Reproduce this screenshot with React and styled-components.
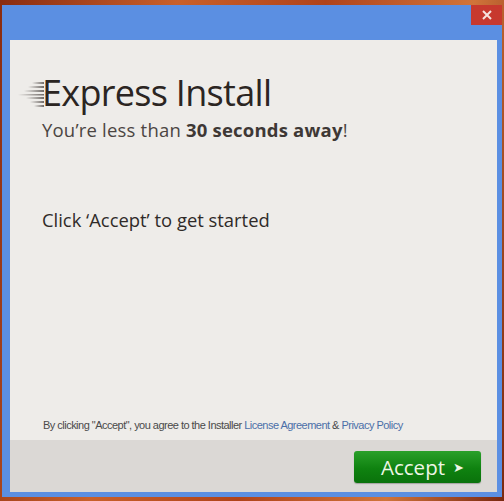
import React from "react";
import styled, { createGlobalStyle } from "styled-components";

const Global = createGlobalStyle`
  html, body {
    margin: 0;
    padding: 0;
    width: 504px;
    height: 501px;
    overflow: hidden;
    background: linear-gradient(100deg, #8a2c10 0%, #c9602a 30%, #b0431a 55%, #d0743a 80%, #7a2810 100%);
  }
`;

export default function App() {
  return (
    <>
      <Global />
      <Window>
        <TitleBar>
          <CloseButton aria-label="Close">
            <svg width="10" height="10" viewBox="0 0 10 10">
              <path d="M1 1L9 9M9 1L1 9" stroke="#f6e3df" strokeWidth="2" />
            </svg>
          </CloseButton>
        </TitleBar>
        <Panel>
          <Main>
            <Heading>
              <SpeedLines width="26" height="26" viewBox="0 0 26 26">
                <defs>
                  <linearGradient id="fade" x1="0" x2="1" y1="0" y2="0">
                    <stop offset="0" stopColor="#3a3330" stopOpacity="0" />
                    <stop offset="1" stopColor="#3a3330" stopOpacity="0.7" />
                  </linearGradient>
                </defs>
                <rect x="14" y="1" width="12" height="2" fill="url(#fade)" />
                <rect x="10" y="5" width="16" height="2" fill="url(#fade)" />
                <rect x="6" y="9" width="20" height="2" fill="url(#fade)" />
                <rect x="0" y="13" width="26" height="1.5" fill="url(#fade)" />
                <rect x="8" y="16" width="18" height="2" fill="url(#fade)" />
                <rect x="12" y="20" width="14" height="2" fill="url(#fade)" />
                <rect x="16" y="24" width="10" height="2" fill="url(#fade)" />
              </SpeedLines>
              Express Install
            </Heading>
            <Subtitle>
              You’re less than <strong>30 seconds away</strong>!
            </Subtitle>
            <Prompt>Click ‘Accept’ to get started</Prompt>
            <Legal>
              By clicking "Accept", you agree to the Installer{" "}
              <LegalLink>License Agreement</LegalLink> &amp;{" "}
              <LegalLink>Privacy Policy</LegalLink>
            </Legal>
          </Main>
          <Footer>
            <AcceptButton>
              Accept <Arrow>➤</Arrow>
            </AcceptButton>
          </Footer>
        </Panel>
      </Window>
    </>
  );
}

const Window = styled.div`
  margin: 5px 0 0 2px;
  width: 500px;
  height: 492px;
  background: #5b8fe2;
  display: flex;
  flex-direction: column;
  padding: 0 5px 5px 8px;
  box-sizing: border-box;
`;

const TitleBar = styled.div`
  height: 35px;
  display: flex;
  justify-content: flex-end;
  align-items: flex-start;
  margin-right: -5px;
`;

const CloseButton = styled.div`
  width: 31px;
  height: 20px;
  background: #c7392e;
  display: flex;
  align-items: center;
  justify-content: center;
`;

const Panel = styled.div`
  flex: 1;
  display: flex;
  flex-direction: column;
  background: #eeece9;
`;

const Main = styled.div`
  flex: 1;
  padding: 33px 0 0 32px;
  display: flex;
  flex-direction: column;
  font-family: "Open Sans", "Liberation Sans", sans-serif;
`;

const Heading = styled.h1`
  position: relative;
  margin: 0;
  font-weight: 400;
  font-size: 36px;
  line-height: 40px;
  letter-spacing: -0.7px;
  color: #2b2522;
`;

const SpeedLines = styled.svg`
  position: absolute;
  left: -24px;
  top: 8px;
`;

const Subtitle = styled.p`
  margin: 5px 0 0;
  font-size: 18.5px;
  line-height: 24px;
  letter-spacing: 0.2px;
  color: #4b4542;
  strong {
    font-weight: 700;
    color: #3e3835;
  }
`;

const Prompt = styled.p`
  margin: 66px 0 0;
  font-size: 18.4px;
  line-height: 24px;
  color: #2f2a28;
`;

const Legal = styled.p`
  margin: auto 0 9px 1px;
  font-family: "Liberation Sans", Arial, sans-serif;
  font-size: 11px;
  letter-spacing: -0.52px;
  color: #4a4a4a;
`;

const LegalLink = styled.span`
  color: #4b6fa8;
`;

const Footer = styled.div`
  height: 52px;
  background: #dbd8d5;
  display: flex;
  justify-content: flex-end;
  align-items: flex-start;
  padding: 11px 16px 0 0;
  box-sizing: border-box;
`;

const AcceptButton = styled.div`
  width: 127px;
  height: 32px;
  border-radius: 3px;
  background: linear-gradient(#2aa02a, #0f8210 55%, #0a720b);
  box-shadow: 0 1px 1px rgba(0, 0, 0, 0.25);
  color: #eef6e6;
  font-family: "Open Sans", "Liberation Sans", sans-serif;
  font-size: 20.5px;
  display: flex;
  align-items: center;
  justify-content: center;
  gap: 8px;
  padding-left: 10px;
  box-sizing: border-box;
`;

const Arrow = styled.span`
  font-size: 13px;
`;
